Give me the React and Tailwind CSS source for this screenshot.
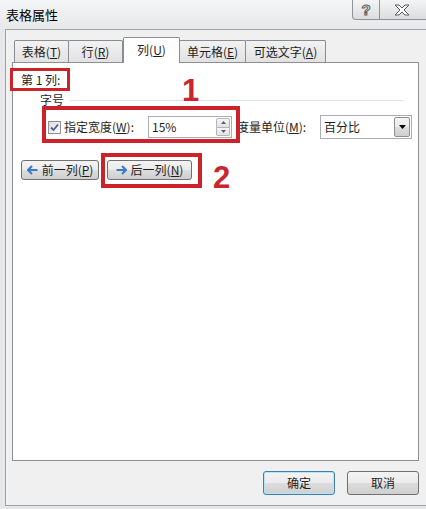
import React from "react";

const F = "font-['Noto_Sans_CJK_SC','Liberation_Sans',sans-serif]";

function Tab({ label, acc, w, selected }) {
  if (selected) {
    return (
      <div
        className={`relative z-10 -mb-px flex h-[26px] items-start justify-center rounded-t-[2px] border border-b-0 border-[#898c95] bg-white pt-[3px] text-[12px] text-[#1e1e1e] ${w}`}
      >
        <span>
          {label}(<u>{acc}</u>)
        </span>
      </div>
    );
  }
  return (
    <div
      className={`-ml-px flex h-[22px] items-center justify-center rounded-t-[2px] border border-b-0 border-[#898c95] bg-gradient-to-b from-[#f2f2f2] to-[#e2e2e2] text-[12px] text-[#1e1e1e] first:ml-0 ${w}`}
    >
      <span>
        {label}(<u>{acc}</u>)
      </span>
    </div>
  );
}

function Arrow({ dir }) {
  return (
    <svg width="11" height="10" viewBox="0 0 11 10" className="shrink-0">
      {dir === "left" ? (
        <path d="M5 1 L1 5 L5 9 M1.5 5 H10.5" stroke="#3a78c8" strokeWidth="2" fill="none" />
      ) : (
        <path d="M6 1 L10 5 L6 9 M0.5 5 H9.5" stroke="#3a78c8" strokeWidth="2" fill="none" />
      )}
    </svg>
  );
}

function WinButton({ children, w, def, h = "h-[20px]" }) {
  return (
    <div
      className={`flex ${h} ${w} items-center justify-center gap-[4px] rounded-[3px] border ${
        def ? "border-[#3c7fb1] shadow-[inset_0_0_0_1px_#b9e3f7]" : "border-[#707070]"
      } bg-[linear-gradient(to_bottom,#f3f3f3_0%,#ebebeb_50%,#dddddd_51%,#cfcfcf_100%)] text-[12px] text-[#1e1e1e]`}
    >
      {children}
    </div>
  );
}

export default function App() {
  return (
    <div className={`relative h-[509px] w-[426px] overflow-hidden bg-[#e6e7e9] ${F}`}>
      {/* title bar */}
      <div className="flex h-[29px] items-start bg-gradient-to-b from-[#f5f5f6] to-[#e7e8ea]">
        <div className="self-center pl-[6px] text-[13px] text-black">表格属性</div>
        <div className="ml-auto flex h-[20px]">
          <div className="flex w-[28px] items-center justify-center rounded-bl-[4px] border border-t-0 border-[#8d9299] bg-gradient-to-b from-[#f4f4f4] to-[#dcdde0]">
            <span className="text-[15px] font-bold leading-none text-white [-webkit-text-stroke:1px_#5a5a5a] [font-family:'Liberation_Sans',sans-serif]">
              ?
            </span>
          </div>
          <div className="-ml-px flex w-[47px] items-center justify-center border border-r-0 border-t-0 border-[#8d9299] bg-gradient-to-b from-[#f4f4f4] to-[#dcdde0] pr-[3px]">
            <svg width="16" height="12" viewBox="0 0 16 12">
              <path
                d="M1 1 H5 L8 4 L11 1 H15 L10 6 L15 11 H11 L8 8 L5 11 H1 L6 6 Z"
                fill="#ffffff"
                stroke="#5a5a5a"
                strokeWidth="1"
                strokeLinejoin="round"
              />
            </svg>
          </div>
        </div>
      </div>

      {/* dialog body */}
      <div className="ml-[5px] flex h-[477px] flex-col border-y border-l border-[#a0a0a0] bg-[#f0f0f0] pt-[7px]">
        {/* tabs */}
        <div className="flex h-[25px] items-end pl-[8px]">
          <Tab label="表格" acc="T" w="w-[55px]" />
          <Tab label="行" acc="R" w="w-[55px]" />
          <Tab label="列" acc="U" w="w-[57px]" selected />
          <Tab label="单元格" acc="E" w="w-[67px]" />
          <Tab label="可选文字" acc="A" w="w-[81px] -ml-px" />
        </div>

        {/* panel */}
        <div className="ml-[6px] flex h-[399px] w-[407px] flex-col border border-[#8e8f8f] bg-white text-[12px] text-[#1e1e1e]">
          <div className="mt-[9px] pl-[8px] leading-[16px]">第 1 列:</div>
          <div className="mt-[4px] flex items-center pl-[27px] leading-[16px]">
            <span>字号</span>
            <div className="ml-[6px] mr-[15px] h-px flex-1 bg-[#dde3e8]" />
          </div>

          <div className="mt-[7px] flex h-[24px] items-center pl-[35px]">
            <div className="flex h-[13px] w-[13px] items-center justify-center border border-[#8f8f8f] bg-gradient-to-br from-[#dcdcdc] to-[#fbfbfb]">
              <svg width="9" height="9" viewBox="0 0 9 9">
                <path d="M1 4.5 L3.5 7 L8 1.5" stroke="#4a5f97" strokeWidth="1.8" fill="none" />
              </svg>
            </div>
            <div className="ml-[3px] w-[84px]">
              指定宽度(<u>W</u>):
            </div>
            <div className="flex h-[22px] w-[84px] items-center border border-[#abadb3] bg-white">
              <span className="flex-1 pl-[3px]">15%</span>
              <div className="mr-[1px] flex h-[18px] w-[14px] flex-col">
                <div className="flex flex-1 items-center justify-center rounded-t-[2px] border border-[#b5b5b5] bg-gradient-to-b from-[#f6f6f6] to-[#e2e2e2]">
                  <svg width="5" height="3" viewBox="0 0 5 3">
                    <path d="M0 3 L2.5 0 L5 3 Z" fill="#4d6185" />
                  </svg>
                </div>
                <div className="flex flex-1 items-center justify-center rounded-b-[2px] border border-t-0 border-[#b5b5b5] bg-gradient-to-b from-[#f6f6f6] to-[#e2e2e2]">
                  <svg width="5" height="3" viewBox="0 0 5 3">
                    <path d="M0 0 L2.5 3 L5 0 Z" fill="#4d6185" />
                  </svg>
                </div>
              </div>
            </div>
            <div className="ml-[5px] w-[83px]">
              度量单位(<u>M</u>):
            </div>
            <div className="flex h-[24px] w-[92px] items-center border border-[#abadb3] bg-white">
              <span className="flex-1 pl-[3px]">百分比</span>
              <div className="mr-px flex h-[20px] w-[16px] items-center justify-center rounded-[2px] border border-[#8e8f8f] bg-[linear-gradient(to_bottom,#f3f3f3_0%,#ebebeb_50%,#dddddd_51%,#cfcfcf_100%)]">
                <svg width="7" height="4" viewBox="0 0 7 4">
                  <path d="M0 0 L3.5 4 L7 0 Z" fill="#000" />
                </svg>
              </div>
            </div>
          </div>

          <div className="mt-[21px] flex pl-[8px]">
            <WinButton w="w-[78px]">
              <Arrow dir="left" />
              <span>
                前一列(<u>P</u>)
              </span>
            </WinButton>
            <div className="ml-[8px]">
              <WinButton w="w-[85px]">
                <Arrow dir="right" />
                <span>
                  后一列(<u>N</u>)
                </span>
              </WinButton>
            </div>
          </div>
        </div>

        {/* footer buttons */}
        <div className="mt-[10px] flex justify-end gap-[12px] pr-[7px]">
          <WinButton w="w-[72px]" h="h-[24px]" def>
            确定
          </WinButton>
          <WinButton w="w-[72px]" h="h-[24px]">
            取消
          </WinButton>
        </div>
      </div>

      {/* annotations */}
      <div className="absolute left-[10px] top-[68px] h-[23px] w-[60px] border-[3px] border-[#cc2229]" />
      <div className="absolute left-[42px] top-[106px] h-[37px] w-[198px] border-[4px] border-[#cc2229]" />
      <div className="absolute left-[101px] top-[153px] h-[35px] w-[101px] border-[4px] border-[#cc2229]" />
      <div className="absolute left-[182px] top-[75px] text-[31px] font-bold leading-[31px] text-[#c9262e] [font-family:'Liberation_Sans',sans-serif]">
        1
      </div>
      <div className="absolute left-[213px] top-[162px] text-[31px] font-bold leading-[31px] text-[#c9262e] [font-family:'Liberation_Sans',sans-serif]">
        2
      </div>
    </div>
  );
}
